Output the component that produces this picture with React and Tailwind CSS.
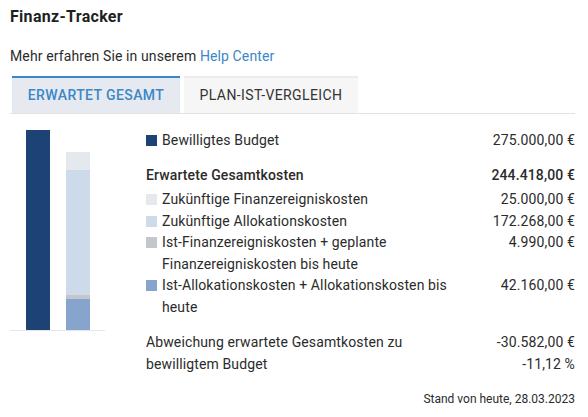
import React from "react";

const rows = [
  { label: "Zukünftige Finanzereigniskosten", value: "25.000,00 €", color: "bg-[#e5e9ed]" },
  { label: "Zukünftige Allokationskosten", value: "172.268,00 €", color: "bg-[#cddaea]" },
  { label: "Ist-Finanzereigniskosten + geplante Finanzereigniskosten bis heute", value: "4.990,00 €", color: "bg-[#c3c6cc]" },
  { label: "Ist-Allokationskosten + Allokationskosten bis heute", value: "42.160,00 €", color: "bg-[#87a5cc]" },
];

function LegendRow({ color, label, value, bold }) {
  return (
    <div className="flex justify-between gap-6">
      <div className="flex">
        {color ? (
          <span className={`mt-[5px] mr-[5px] w-[11px] h-[11px] shrink-0 ${color}`} />
        ) : null}
        <span className={bold ? "font-medium" : ""}>{label}</span>
      </div>
      <span className={`shrink-0 whitespace-nowrap ${bold ? "font-medium" : ""}`}>{value}</span>
    </div>
  );
}

export default function App() {
  return (
    <div className="w-[588px] h-[417px] bg-white text-[#2b2b2b] text-[14px] leading-[21.5px] tracking-[0.12px] px-[10px] font-['Roboto',sans-serif]">
      <h1 className="pt-[7px] text-[16px] leading-[20px] font-bold text-[#1f1f1f] tracking-[0.3px]">Finanz-Tracker</h1>

      <p className="mt-[19px] leading-[20px]">
        Mehr erfahren Sie in unserem <span className="text-[#3b87c7]">Help Center</span>
      </p>

      {/* Tabs */}
      <div className="mt-[10px] mr-[3px] flex gap-[4px] pl-[2px] border-b border-[#e2e2e2]">
        <div className="w-[168px] h-[37px] flex items-center justify-center bg-[#e6eaf0] border-t-2 border-[#3b87c7] text-[#3b87c7] font-medium tracking-[0.4px]">
          ERWARTET GESAMT
        </div>
        <div className="w-[174px] h-[37px] flex items-center justify-center bg-[#f6f6f6] border-t-2 border-[#ececec] text-[#333] tracking-[0.4px]">
          PLAN-IST-VERGLEICH
        </div>
      </div>

      <div className="flex mr-[3px]">
        {/* Chart */}
        <div className="w-[95px] shrink-0 pt-[16px]">
          <div className="h-[200px] flex items-end gap-[16px] pl-[16px] border-b border-[#e6e6e6] box-content">
            <div className="w-[24px] h-[200px] bg-[#1d4275]" />
            <div className="w-[24px] h-[178px] flex flex-col">
              <div className="h-[18px] bg-[#e5e9ed]" />
              <div className="h-[125px] bg-[#cddaea]" />
              <div className="h-[4px] bg-[#c3c6cc]" />
              <div className="h-[31px] bg-[#87a5cc]" />
            </div>
          </div>
        </div>

        {/* Legend */}
        <div className="flex-1 ml-[41px] pt-[16px]">
          <LegendRow color="bg-[#1d4275]" label="Bewilligtes Budget" value="275.000,00 €" />
          <div className="mt-[13px] mb-[3px]">
            <LegendRow label="Erwartete Gesamtkosten" value="244.418,00 €" bold />
          </div>
          {rows.map((r, i) => (
            <LegendRow key={i} color={r.color} label={r.label} value={r.value} />
          ))}
          <div className="mt-[14px] flex justify-between">
            <span>
              Abweichung erwartete Gesamtkosten zu
              <br />
              bewilligtem Budget
            </span>
            <span className="text-right">
              -30.582,00 €
              <br />
              -11,12 %
            </span>
          </div>
          <div className="mt-[16px] text-right text-[12px] leading-[16px] tracking-normal">Stand von heute, 28.03.2023</div>
        </div>
      </div>
    </div>
  );
}
